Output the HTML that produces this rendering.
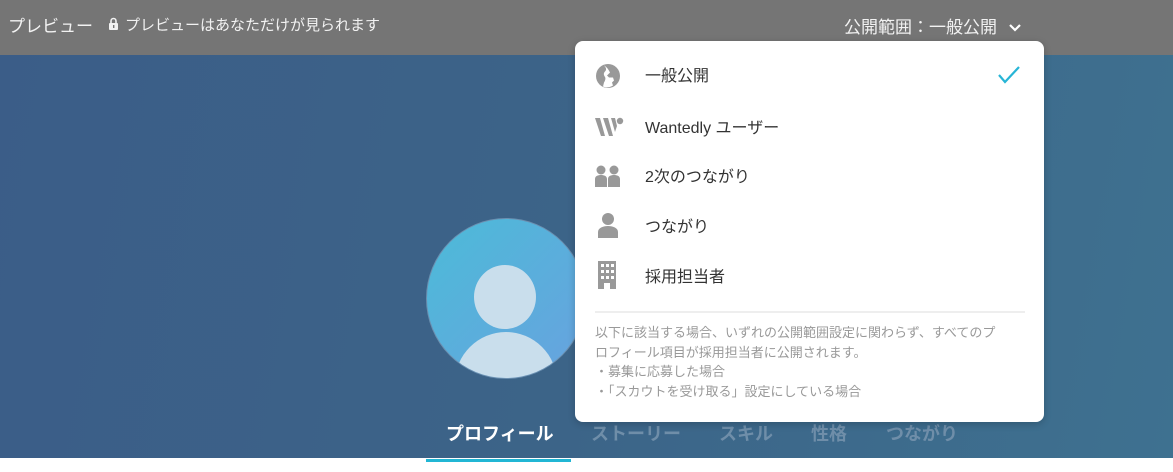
<!DOCTYPE html>
<html><head><meta charset="utf-8"><style>
*{margin:0;padding:0;box-sizing:border-box}
body{width:1173px;height:472px;overflow:hidden;background:#fff;font-family:"Liberation Sans","Noto Sans CJK JP",sans-serif;position:relative}
.hero{position:absolute;left:0;top:55px;width:1173px;height:403px;background:linear-gradient(100deg,#3b5d88 0%,#3c6488 50%,#3e7190 100%);overflow:hidden}
.bar{position:absolute;left:0;top:0;width:1173px;height:55px;background:#757575;color:#fff}
.bar .t1{position:absolute;left:8px;top:12px;font-size:17px;color:#f2f2f2}
.bar .t2{position:absolute;left:125px;top:14px;font-size:15px;color:#f2f2f2}
.bar .t3{position:absolute;left:844px;top:13px;font-size:17px;color:#f2f2f2}
.dd{position:absolute;left:575px;top:41px;width:469px;height:381px;background:#fff;border-radius:8px;box-shadow:0 2px 8px rgba(0,0,0,.2)}
.it{position:absolute;left:70px;font-size:16px;color:#333}
.ic{position:absolute;left:20px}
.note{position:absolute;left:20px;top:282px;font-size:13px;line-height:19.5px;color:#999;width:408px}
.hr{position:absolute;left:20px;top:270px;width:430px;height:2px;background:#eee}
.tab{position:absolute;top:420px;font-size:18px;font-weight:bold;color:#6f8ea9}
</style></head><body>
<div class="hero"></div>
<div style="position:absolute;left:426px;top:218px;width:160px;height:161px;border-radius:50%;background:linear-gradient(135deg,#4cbbd8,#68a2df);border:1px solid #6b8fb0;overflow:hidden">
<div style="position:absolute;left:47px;top:46px;width:62px;height:64px;border-radius:50%;background:#c9deec"></div>
<div style="position:absolute;left:28px;top:113px;width:102px;height:80px;border-radius:51px 51px 0 0;background:#c9deec"></div>
</div>
<div class="tab" style="left:446px;color:#fff">プロフィール</div>
<div class="tab" style="left:591px">ストーリー</div>
<div class="tab" style="left:719px">スキル</div>
<div class="tab" style="left:811px">性格</div>
<div class="tab" style="left:886px">つながり</div>
<div style="position:absolute;left:426px;top:459px;width:145px;height:3px;background:#21b6d4"></div>
<div class="bar">
<div class="t1">プレビュー</div>
<svg style="position:absolute;left:108px;top:17px" width="11" height="13" viewBox="0 0 11 13"><path d="M3 6V4a2.5 2.5 0 015 0v2" fill="none" stroke="#f2f2f2" stroke-width="1.6"/><rect x="1" y="6" width="9" height="7" rx="1" fill="#f2f2f2"/><rect x="5" y="8" width="1.4" height="3" fill="#757575"/></svg>
<div class="t2">プレビューはあなただけが見られます</div>
<div class="t3">公開範囲：一般公開 <svg width="14" height="10" viewBox="0 0 14 10" style="margin-left:6px"><path d="M2 2l5 5 5-5" fill="none" stroke="#fff" stroke-width="2.2"/></svg></div>
</div>
<div class="dd">
<svg class="ic" style="top:22px" width="26" height="26" viewBox="0 0 26 26"><circle cx="13" cy="13" r="12" fill="#999"/><path d="M9 2.5c2 2 3 4 1 6-2 2-1 4 0 5.5 1 1.5 0 4-1 5.5l-1 4c3 1.5 7 1 10-1l-1-3 2-2-1-3-4 0-2-2 3-3c-2-4-4-6-6-7z" fill="#fff"/></svg>
<div class="it" style="top:21px">一般公開</div>
<svg style="position:absolute;left:421px;top:24px" width="26" height="20" viewBox="0 0 26 20"><path d="M3 10l6 7L23 2" fill="none" stroke="#27b5d6" stroke-width="2.2"/></svg>
<svg class="ic" style="top:76px" width="30" height="20" viewBox="0 0 30 20"><path d="M0 1h5l5 18H6z M8 1h5l5 18h-4z M16 1h4l2 8-2 6z" fill="#999"/><circle cx="25" cy="4" r="3.2" fill="#999"/></svg>
<div class="it" style="top:73px">Wantedly ユーザー</div>
<svg class="ic" style="top:124px" width="26" height="22" viewBox="0 0 26 22"><circle cx="6" cy="5" r="4.5" fill="#999"/><circle cx="19" cy="5" r="4.5" fill="#999"/><path d="M0 22v-8c0-3 3-4 6-4s6 1 6 4v8z M13 22v-8c0-3 3-4 6-4s6 1 6 4v8z" fill="#999"/></svg>
<div class="it" style="top:122px">2次のつながり</div>
<svg class="ic" style="top:171px" width="26" height="26" viewBox="0 0 26 26"><circle cx="13" cy="7" r="6" fill="#999"/><path d="M3 26v-6c0-4 5-6 10-6s10 2 10 6v6z" fill="#999"/></svg>
<div class="it" style="top:172px">つながり</div>
<svg class="ic" style="top:220px" width="26" height="28" viewBox="0 0 26 28"><path d="M3 0h18v28h-6v-6h-6v6H3z" fill="#999"/><g fill="#fff"><rect x="6" y="3" width="3" height="3"/><rect x="11" y="3" width="3" height="3"/><rect x="16" y="3" width="3" height="3"/><rect x="6" y="9" width="3" height="3"/><rect x="11" y="9" width="3" height="3"/><rect x="16" y="9" width="3" height="3"/><rect x="6" y="15" width="3" height="3"/><rect x="11" y="15" width="3" height="3"/><rect x="16" y="15" width="3" height="3"/></g></svg>
<div class="it" style="top:222px">採用担当者</div>
<div class="hr"></div>
<div class="note">以下に該当する場合、いずれの公開範囲設定に関わらず、すべてのプロフィール項目が採用担当者に公開されます。<br>・募集に応募した場合<br>・「スカウトを受け取る」設定にしている場合</div>
</div>
</body></html>
